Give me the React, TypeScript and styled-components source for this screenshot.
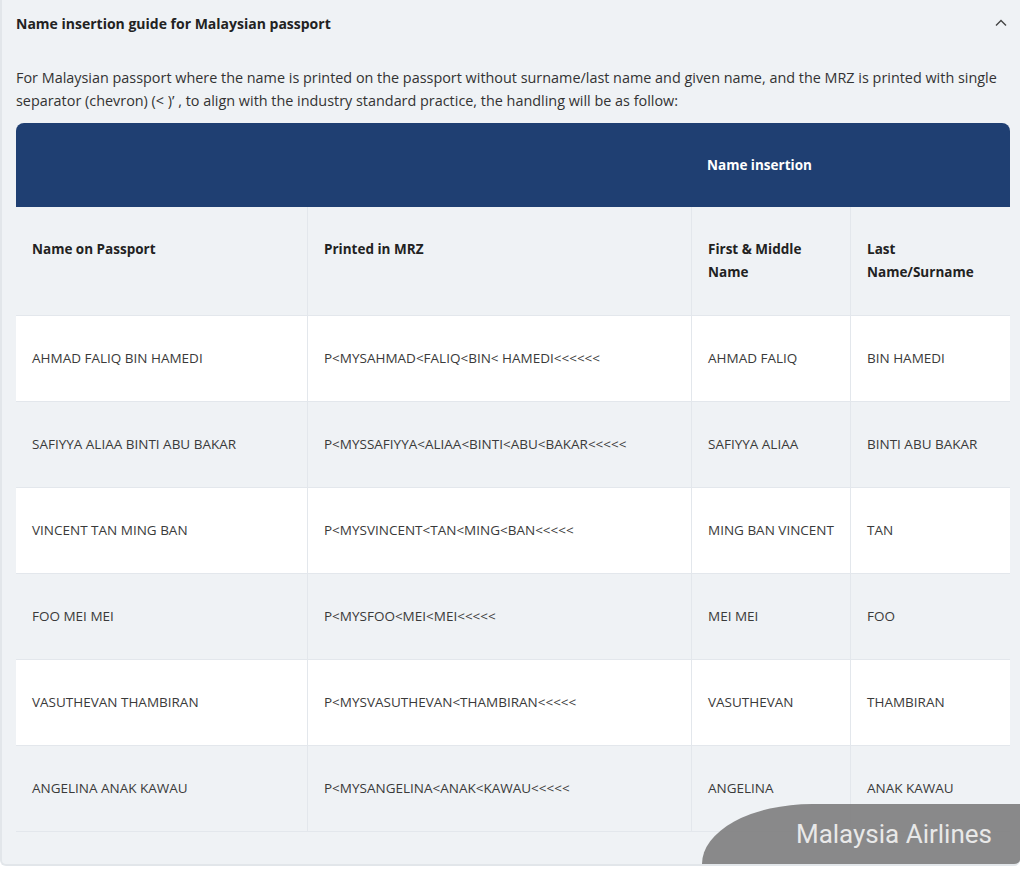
import React from "react";
import styled, { createGlobalStyle } from "styled-components";

const Global = createGlobalStyle`
  html, body { margin: 0; padding: 0; background: #ffffff; }
  body { font-family: "Open Sans", "Lato", sans-serif; color: #333; }
`;

const Panel = styled.div`
  position: relative;
  width: 1020px;
  height: 866px;
  background: #eff2f5;
  border-left: 2px solid #e2e6ea;
  border-bottom: 2px solid #e2e6ea;
  border-radius: 0 0 6px 6px;
  padding: 0 12px 0 14px;
  box-sizing: border-box;
  overflow: hidden;
`;

const Header = styled.div`
  display: flex;
  justify-content: space-between;
  align-items: center;
  height: 46px;
  font-weight: 700;
  font-size: 14px;
  color: #222;
`;

const Intro = styled.p`
  margin: 20px 0 11px;
  font-size: 14.4px;
  line-height: 23px;
  color: #333;
`;

const Table = styled.div`
  display: grid;
  grid-template-columns: 291px 384px 159px 160px;
  width: 994px;
`;

const Blue = styled.div`
  grid-column: 1 / -1;
  display: grid;
  grid-template-columns: 675px 1fr;
  height: 84px;
  background: #1f3f72;
  border-radius: 8px 8px 0 0;
  align-items: center;
`;

const BlueLabel = styled.div`
  grid-column: 2;
  padding-left: 16px;
  color: #fff;
  font-weight: 700;
  font-size: 13.5px;
`;

const Cell = styled.div<{ $bg: string; $head?: boolean }>`
  background: ${(p) => p.$bg};
  padding: 31px 16px;
  line-height: 23px;
  font-size: 13.5px;
  font-weight: ${(p) => (p.$head ? 700 : 400)};
  color: ${(p) => (p.$head ? "#222" : "#3a3a3a")};
  border-left: 1px solid #e3e7ec;
  border-bottom: 1px solid #e3e7ec;
  &:nth-child(4n + 2) { border-left: none; }
`;

const Mark = styled.div`
  position: absolute;
  right: 0;
  bottom: 0;
  width: 318px;
  height: 60px;
  background: rgba(128, 128, 128, 0.92);
  border-top-left-radius: 110px 60px;
  display: flex;
  align-items: center;
  justify-content: flex-end;
  padding-right: 28px;
  box-sizing: border-box;
  color: #e8e8e8;
  font-family: "Roboto", sans-serif;
  font-size: 26px;
`;

const rows = [
  ["AHMAD FALIQ BIN HAMEDI", "P<MYSAHMAD<FALIQ<BIN< HAMEDI<<<<<<", "AHMAD FALIQ", "BIN HAMEDI"],
  ["SAFIYYA ALIAA BINTI ABU BAKAR", "P<MYSSAFIYYA<ALIAA<BINTI<ABU<BAKAR<<<<<", "SAFIYYA ALIAA", "BINTI ABU BAKAR"],
  ["VINCENT TAN MING BAN", "P<MYSVINCENT<TAN<MING<BAN<<<<<", "MING BAN VINCENT", "TAN"],
  ["FOO MEI MEI", "P<MYSFOO<MEI<MEI<<<<<", "MEI MEI", "FOO"],
  ["VASUTHEVAN THAMBIRAN", "P<MYSVASUTHEVAN<THAMBIRAN<<<<<", "VASUTHEVAN", "THAMBIRAN"],
  ["ANGELINA ANAK KAWAU", "P<MYSANGELINA<ANAK<KAWAU<<<<<", "ANGELINA", "ANAK KAWAU"],
];

export default function App() {
  return (
    <>
      <Global />
      <Panel>
        <Header>
          <span>Name insertion guide for Malaysian passport</span>
          <svg width="14" height="14" viewBox="0 0 14 14" fill="none" stroke="#444" strokeWidth="1.4">
            <path d="M2 9.5 L7 4.5 L12 9.5" />
          </svg>
        </Header>
        <Intro>
          For Malaysian passport where the name is printed on the passport without surname/last name and given name, and the MRZ is printed with
          single separator (chevron) (&lt; )’ , to align with the industry standard practice, the handling will be as follow:
        </Intro>
        <Table>
          <Blue>
            <BlueLabel>Name insertion</BlueLabel>
          </Blue>
          {["Name on Passport", "Printed in MRZ", "First & Middle Name", "Last Name/Surname"].map((h) => (
            <Cell key={h} $bg="#eff2f5" $head>{h}</Cell>
          ))}
          {rows.map((r, i) =>
            r.map((c, j) => (
              <Cell key={`${i}-${j}`} $bg={i % 2 === 0 ? "#ffffff" : "#eff2f5"}>{c}</Cell>
            ))
          )}
        </Table>
        <Mark>Malaysia Airlines</Mark>
      </Panel>
    </>
  );
}
